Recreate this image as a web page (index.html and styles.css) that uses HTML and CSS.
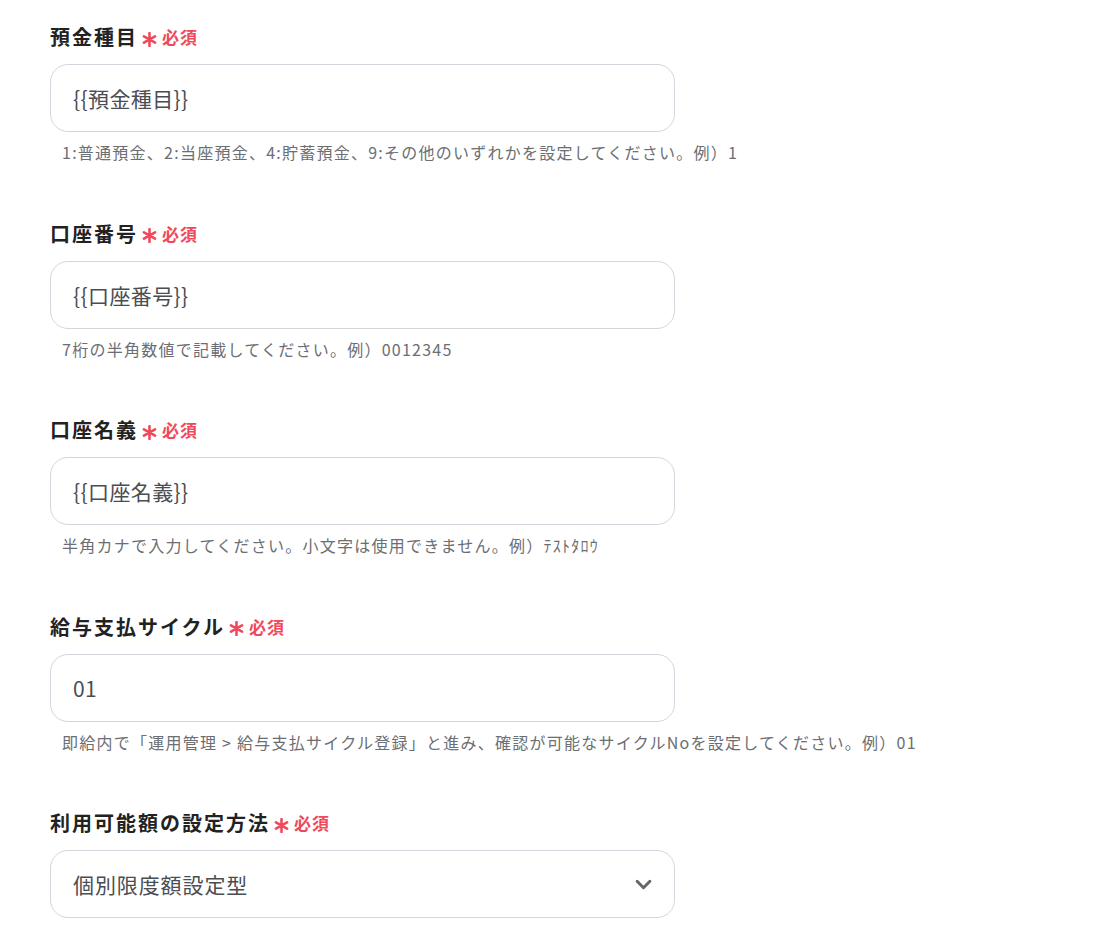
FILE: index.html
```html
<!DOCTYPE html>
<html lang="ja">
<head>
    <meta charset="UTF-8">
    <title>口座情報の設定</title>
    <link rel="stylesheet" href="styles.css">
</head>
<body>
    <form class="form">
        <div class="field">
            <label class="label" for="deposit_type">預金種目<span class="req"><svg class="ast" viewBox="0 0 14 14"><path d="M7 1v12M1.8 4l10.4 6M12.2 4L1.8 10"/></svg>必須</span></label>
            <input class="input" id="deposit_type" type="text" value="{{預金種目}}">
            <p class="help">1:普通預金、2:当座預金、4:貯蓄預金、9:その他のいずれかを設定してください。例）1</p>
        </div>
        <div class="field">
            <label class="label" for="account_no">口座番号<span class="req"><svg class="ast" viewBox="0 0 14 14"><path d="M7 1v12M1.8 4l10.4 6M12.2 4L1.8 10"/></svg>必須</span></label>
            <input class="input" id="account_no" type="text" value="{{口座番号}}">
            <p class="help">7桁の半角数値で記載してください。例）0012345</p>
        </div>
        <div class="field">
            <label class="label" for="account_name">口座名義<span class="req"><svg class="ast" viewBox="0 0 14 14"><path d="M7 1v12M1.8 4l10.4 6M12.2 4L1.8 10"/></svg>必須</span></label>
            <input class="input" id="account_name" type="text" value="{{口座名義}}">
            <p class="help">半角カナで入力してください。小文字は使用できません。例）ﾃｽﾄﾀﾛｳ</p>
        </div>
        <div class="field">
            <label class="label" for="pay_cycle">給与支払サイクル<span class="req"><svg class="ast" viewBox="0 0 14 14"><path d="M7 1v12M1.8 4l10.4 6M12.2 4L1.8 10"/></svg>必須</span></label>
            <input class="input" id="pay_cycle" type="text" value="01">
            <p class="help">即給内で「運用管理 &gt; 給与支払サイクル登録」と進み、確認が可能なサイクルNoを設定してください。例）01</p>
        </div>
        <div class="field">
            <label class="label" for="limit_type">利用可能額の設定方法<span class="req"><svg class="ast" viewBox="0 0 14 14"><path d="M7 1v12M1.8 4l10.4 6M12.2 4L1.8 10"/></svg>必須</span></label>
            <div class="select">
                <span class="select-value">個別限度額設定型</span>
                <svg class="chev" viewBox="0 0 16 10"><path d="M2 2l6 6 6-6"/></svg>
            </div>
        </div>
    </form>
</body>
</html>
```

FILE: styles.css
```css
/* フォーム全体 */
body { margin: 0; background: #fff; font-family: "Noto Sans CJK JP", "Noto Sans", sans-serif; color: #222; }
.form { padding: 23px 0 0 50px; }
.field { display: flex; flex-direction: column; align-items: flex-start; margin-bottom: 56.5px; }

.label { display: flex; align-items: center; height: 27px; font-size: 20px; font-weight: 700; letter-spacing: 2px; color: #222; }
.req { display: inline-flex; align-items: center; margin-left: 4px; font-size: 17px; letter-spacing: 1px; color: #ef4a5c; }
.ast { width: 15px; height: 15px; margin-right: 5px; margin-top: 5px; fill: none; stroke: #ef4a5c; stroke-width: 2.4; stroke-linecap: round; }

.input, .select { box-sizing: border-box; width: 625px; height: 68px; margin-top: 14px; border: 1px solid #d3d6dc; border-radius: 18px; background: #fff; }
.input { padding: 0 22px; font-family: inherit; font-size: 21px; letter-spacing: 0.4px; color: #4a4d52; outline: none; }

.help { margin: 9px 0 0 12px; font-size: 16px; line-height: 22px; letter-spacing: 1.25px; white-space: nowrap; color: #6b6e73; }

.select { display: flex; align-items: center; justify-content: space-between; padding: 0 22px; }
.select-value { font-size: 21px; letter-spacing: 0.9px; color: #4a4d52; }
.chev { width: 17px; height: 11px; fill: none; stroke: #666; stroke-width: 2.8; stroke-linecap: round; stroke-linejoin: round; }
```
